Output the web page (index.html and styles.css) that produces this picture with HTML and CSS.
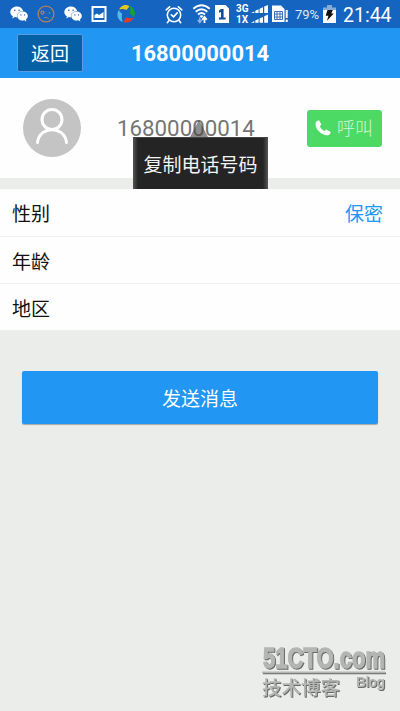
FILE: index.html
```html
<!DOCTYPE html>
<html lang="zh-CN">
<head>
<meta charset="utf-8">
<title>16800000014</title>
<link rel="stylesheet" href="styles.css">
</head>
<body>
<svg class="defs" aria-hidden="true">
  <symbol id="wechat" viewBox="0 0 18 16">
    <path fill="#fff" d="M7 .5C3.2.5.3 3 .3 6c0 1.800 1 3.300 2.600 4.300L2.300 12.500 4.800 11.100c.7.2 1.400.3 2.100.3C6.700 7.800 9.300 5.200 13.200 5.100 12.500 2.400 10 .5 7 .5z"/>
    <path fill="#fff" d="M12.600 5.600c-3 0-5.300 2-5.300 4.500s2.300 4.500 5.300 4.500c.6 0 1.200-.1 1.800-.3l2 1.100-.5-1.800c1.200-.8 1.900-2.100 1.900-3.500 0-2.500-2.300-4.500-5.200-4.500z"/>
    <g fill="#1862b8"><circle cx="4.800" cy="4.300" r=".8"/><circle cx="9.100" cy="4.300" r=".8"/><circle cx="10.900" cy="8.900" r=".7"/><circle cx="14.500" cy="8.900" r=".7"/></g>
  </symbol>
</svg>

<header class="status">
  <div class="notices">
    <svg width="18" height="16"><use href="#wechat"/></svg>
    <svg width="18" height="18" viewBox="0 0 18 18" fill="none" stroke="#b28155"><circle cx="9" cy="9" r="7.900" stroke-width="1.300"/><circle cx="5.500" cy="7.600" r="1.500" stroke-width="1.300"/><circle cx="12.400" cy="8" r=".5"/><path d="M7 13c1.500-1 3-.8 4.500.3"/></svg>
    <svg width="18" height="16"><use href="#wechat"/></svg>
    <svg width="16" height="16" viewBox="0 0 16 16"><path fill="#fff" fill-rule="evenodd" d="M.5 0h15v16H.5zM2.500 2v12h11V2z"/><path fill="#fff" d="M3.500 12V9l2.500-1.500L8 9l4.500-3v6z"/></svg>
    <svg width="18" height="18" viewBox="0 0 18 18"><path fill="#e8c31c" d="M2 4.500C5-.8 10-.8 12.500 1.200L9.500 5C7 3.800 4.500 3.700 2 4.500z"/><path fill="#16a52b" d="M12.800.8c5.200 2.200 6 7.700 4.200 11.200L12.800 8.300C13.500 5.800 13.600 3 12.800.8z"/><path fill="#e33a2c" d="M16.500 12.700c-2.500 4.800-6.500 5.500-10 4.300L9.200 12.500c2.500.9 5 .9 7.300.2z"/><path fill="#55bce8" d="M5.800 17C0 14.500-.5 9 1.500 5.200L5.200 9C4.300 11.500 4.700 14.400 5.800 17z"/></svg>
  </div>
  <div class="indicators">
    <svg class="alarm" width="18" height="19" viewBox="0 0 18 19" fill="none" stroke="#fff" stroke-linecap="round"><circle cx="9" cy="10" r="6.700" stroke-width="1.600"/><path stroke-width="1.600" d="M1.200 4.800 4.600 1.800M16.800 4.800 13.400 1.800M4 15.500l-1.700 2.200M14 15.500l1.700 2.200M6.300 9.800l2.300 2.100 3.600-4"/></svg>
    <svg class="wifi" width="20" height="20" viewBox="0 0 20 20" fill="none" stroke="#fff"><path stroke-width="1.800" d="M1.300 4.800q8.200-7 16.400 0M3.700 7.700q5.800-5 11.600 0M6 10.500q3.500-3 7 0"/><path fill="#fff" stroke="none" d="M7.500 12q2-1.600 4 0L9.500 14z"/><path stroke="#8bb3e2" stroke-width="1.600" d="M7.800 13.500v4.500M5.800 16l2 2.500 2-2.500"/><path stroke-width="1.800" d="M12.500 19v-5.500M10.200 15.800l2.300-2.800 2.300 2.800"/></svg>
    <svg class="sim" width="14" height="18" viewBox="0 0 14 18"><path fill="#fff" d="M0 0h10.500L14 3.500V18H0z"/><path fill="#124e9c" d="M6 4h2.600v8.500h2V14.500H4v-2h2V7L4 7.800V5.500z"/></svg>
    <div class="network"><span>3G</span><span>1X</span></div>
    <svg class="signal" width="17" height="18" viewBox="0 0 17 18" fill="#fff"><path d="M0 8l3.300-1.600V8zM4.300 8V5.800L7.600 4.200V8zM8.600 8V3.700L12 2.200V8zM13.200 8V1.500L17 0v8zM0 17.700l3.300-1.600v1.600zM4.300 17.700v-2.200l3.300-1.600v3.800zM8.600 17.700v-4.300L12 11.900v5.800zM13.200 17.700v-6.500L17 9.500v8.200z"/></svg>
    <svg class="card" width="16" height="18" viewBox="0 0 16 18"><path fill="#fff" d="M0 .5h9L12.500 4v13H0zM13.700 5H15.700v8h-2zM13.700 14.500H15.700V17h-2z"/><path fill="none" stroke="#3973b6" d="M2.500 6.500h8v8h-8zM2.500 9h8M2.500 12h8M5 6.500v8M8 6.500v8"/></svg>
    <span class="percent">79%</span>
    <svg class="battery" width="13" height="18" viewBox="0 0 13 18"><path fill="#83acd9" d="M4 0h5v2.500h4V5H0V2.500h4z"/><path fill="#fff" d="M0 5h13v13H0z"/><path fill="#111" d="M4.500 5h5.300L8.300 8.500h2.500L4 15.800l1.400-5H2.700z"/></svg>
    <time class="clock">21:44</time>
  </div>
</header>

<nav class="titlebar">
  <button class="back">返回</button>
  <h1 class="title">16800000014</h1>
</nav>

<main>
  <section class="profile">
    <svg class="avatar" viewBox="0 0 58 58"><circle cx="29" cy="29" r="29" fill="#c3c4c3"/><g fill="none" stroke="#fff" stroke-width="3"><circle cx="29" cy="20.500" r="10"/><path stroke-linecap="round" d="M14.500 43.500c1.800-17 27.200-17 29 0"/></g></svg>
    <div class="phone">16800000014
      <div class="popup">复制电话号码</div>
    </div>
    <button class="call"><svg width="16" height="16" viewBox="0 0 16 16"><path fill="#fff" d="M2 1 4 .2 6.500 4.500 4.900 6.200c.8 2 2.200 3.600 4.400 4.700l2-1.400L15.700 12l-.6 2C11 18.200.3 11 .5 4c0-1.500.7-2.400 1.500-3z"/></svg><span>呼叫</span></button>
  </section>
  <dl class="details">
    <div class="row"><dt>性别</dt><dd>保密</dd></div>
    <div class="row"><dt>年龄</dt><dd></dd></div>
    <div class="row"><dt>地区</dt><dd></dd></div>
  </dl>
  <button class="send">发送消息</button>
</main>

<svg class="watermark" width="130" height="62" viewBox="0 0 130 62">
  <text class="brand" x="1" y="25" textLength="122" lengthAdjust="spacingAndGlyphs">51CTO.com</text>
  <path d="M0 28.500h123v1.700H0z"/>
  <text class="cn" x="0" y="52">技术博客</text>
  <text class="blog" x="94" y="44" textLength="29">Blog</text>
</svg>
</body>
</html>
```
FILE: styles.css
```css
* { box-sizing: border-box; }
body {
  margin: 0;
  width: 400px;
  height: 711px;
  overflow: hidden;
  position: relative;
  background: #ebedeb;
  font-family: Roboto, "Noto Sans CJK SC", sans-serif;
  font-size: 19px;
  color: #111;
}
button { font: inherit; padding: 0; border: 0; color: #fff; }
svg { display: block; flex: none; }
.defs { position: absolute; width: 0; height: 0; }

.status { display: flex; justify-content: space-between; height: 28px; background: #1565c0; color: #fff; }
.notices { display: grid; grid-template-columns: repeat(5, 26.7px); place-items: center; padding-left: 6px; }
.indicators { display: flex; align-items: center; padding-right: 8px; }
.wifi { margin-left: 9px; }
.sim { margin-left: 3px; }
.network { display: flex; flex-direction: column; width: 14px; margin-left: 7px; font-size: 10px; font-weight: 700; line-height: 11px; }
.signal { margin-left: 1px; }
.card { margin-left: 4px; }
.percent { width: 28px; margin-left: 7px; font-size: 13px; line-height: 28px; padding-top: 1px; color: #dce9f8; }
.clock { width: 49px; margin-left: 7px; font-size: 19.500px; line-height: 30px; padding-top: 3px; white-space: nowrap; }

.titlebar { display: grid; grid-template-columns: 66px 1fr 66px; column-gap: 17px; align-items: center; height: 50px; padding: 0 17px; background: #2196f3; }
.back { height: 38px; padding-top: 3px; background: #0560a6; border: 1px solid #5b9be0; border-radius: 2px; line-height: 33px; }
.title { justify-self: center; margin: 0; padding-top: 2px; font-size: 21.900px; font-weight: 700; line-height: 48px; color: #fff; }

.profile { display: flex; align-items: center; height: 100px; padding: 0 18px 0 23px; background: #fdfefd; }
.avatar { width: 58px; height: 58px; }
.phone { position: relative; margin-left: 36px; font-size: 22.300px; line-height: 30px; color: #757575; }
.popup { position: absolute; z-index: 1; left: 16px; top: 24px; width: 135px; height: 52px; padding-top: 3px; background: linear-gradient(90deg, #555, #242424 5px, #242424 130px, #555); border-top: 1px solid #444; color: #f4f4f4; font-size: 19px; line-height: 50px; text-align: center; white-space: nowrap; }
.popup::before { content: ""; position: absolute; left: 57px; top: -18px; border: solid transparent; border-width: 0 9px 17px; border-bottom-color: rgba(70, 65, 65, .6); }
.call { display: flex; align-items: center; gap: 6px; width: 75px; height: 37px; margin-left: auto; padding-left: 8px; background: #4cd964; border-radius: 3px; color: #d5f7da; font-size: 18px; font-weight: 300; line-height: 37px; }
.call span { padding-top: 1px; }

.details { margin: 11px 0 0; background: #fdfefd; }
.row { display: flex; justify-content: space-between; height: 47px; padding: 1px 17px 0 12px; line-height: 50px; border-bottom: 1px solid #eeefee; }
.row:first-child { height: 48px; }
.row dd { margin: 0; color: #2196f3; }
.send { display: block; width: 356px; height: 53px; margin: 40px auto 0; padding-top: 5px; background: #2196f3; border-radius: 2px; line-height: 48px; box-shadow: 0 1px 1px rgba(0, 0, 0, .3); }

.watermark { position: absolute; left: 262px; top: 643px; fill: #b4b6b4; filter: drop-shadow(1.500px 1.500px 0 #686968); }
.brand { font: 700 29px "Liberation Sans", sans-serif; stroke: #b4b6b4; stroke-width: 1.300px; }
.cn { font: 500 19.500px "Noto Sans CJK SC", sans-serif; }
.blog { font: 700 14px "Liberation Sans", sans-serif; }
```
